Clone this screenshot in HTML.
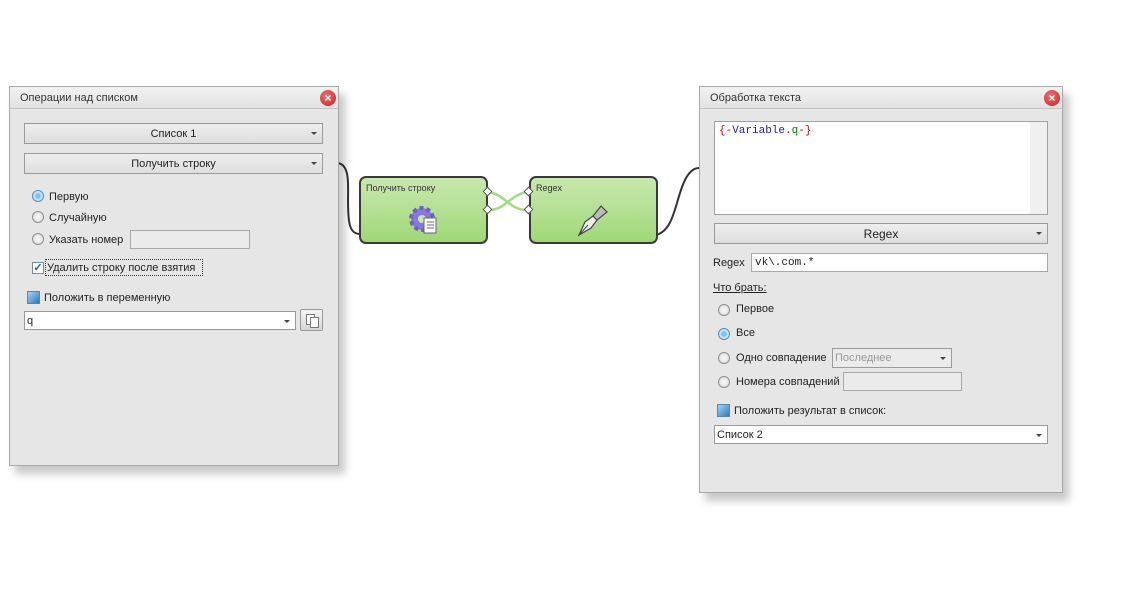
<!DOCTYPE html>
<html><head><meta charset="utf-8"><style>
*{box-sizing:border-box;margin:0;padding:0}
body{width:1137px;height:594px;background:#fff;position:relative;overflow:hidden;font-family:"Liberation Sans",Tahoma,sans-serif;font-size:11px;color:#222}
.a{position:absolute}
.panel{position:absolute;background:#e6e6e6;border:1px solid #a8a8a8;box-shadow:6px 8px 8px rgba(0,0,0,.22)}
.title{position:absolute;left:0;right:0;top:0;height:22px;background:linear-gradient(#f2f2f2,#e2e2e2);border-bottom:1px solid #c4c4c4;padding:5px 0 0 10px;font-size:11px;color:#333}
.close{position:absolute;right:2px;top:3px;width:16px;height:16px;border-radius:50%;background:radial-gradient(circle at 40% 35%,#f07070,#c81e1e);color:#fff;font-size:12px;font-weight:bold;text-align:center;line-height:16px}
.combo{position:absolute;border:1px solid #9a9a9a;background:linear-gradient(#eee,#dedede);text-align:center;line-height:20px}
.combo:after{content:"";position:absolute;right:5px;top:8px;border:3px solid transparent;border-top:3px solid #444}
.white{background:#fff;text-align:left;padding-left:2px}
.radio{position:absolute;width:12px;height:12px;border-radius:50%;border:1px solid #8e8e8e;background:radial-gradient(#fafafa,#d8d8d8)}
.radio.on{background:radial-gradient(#7fc4f2 35%,#bfe0f6 45%,#eee);border-color:#4c8dbf}
.inp{position:absolute;border:1px solid #a8a8a8;background:#ebebeb}
.save{position:absolute;width:13px;height:13px;background:linear-gradient(135deg,#a8d4f4,#2c78c0);border:1px solid #5588aa}
.node{position:absolute;width:129px;height:68px;border:2px solid #3a3a3a;border-radius:7px;background:linear-gradient(#c8e8ae,#9fd878);font-size:9px;color:#333;padding:5px 0 0 5px}
.dia{position:absolute;width:7px;height:7px;background:#fff;border:1px solid #555;transform:rotate(45deg)}
</style></head><body>
<svg class="a" style="left:0;top:0" width="1137" height="594">
<path d="M338 163 C350 165 348 185 348 200 C348 225 350 233 359 234" fill="none" stroke="#333" stroke-width="2"/>
<path d="M656 235 C675 230 675 200 685 180 C690 170 695 168 699 168" fill="none" stroke="#333" stroke-width="2"/>
<path d="M489 192 C505 195 510 210 527 210" fill="none" stroke="#a4d883" stroke-width="2.5"/>
<path d="M489 210 C505 210 510 195 527 192" fill="none" stroke="#a4d883" stroke-width="2.5"/>
</svg>

<div class="panel" style="left:9px;top:86px;width:330px;height:380px">
<div class="title">Операции над списком<div class="close">×</div></div>
</div>
<div class="combo" style="left:24px;top:123px;width:299px;height:21px">Список 1</div>
<div class="combo" style="left:24px;top:153px;width:299px;height:21px">Получить строку</div>
<div class="radio on" style="left:32px;top:190px"></div><div class="a" style="left:49px;top:191px">Первую</div>
<div class="radio" style="left:32px;top:211px"></div><div class="a" style="left:49px;top:212px">Случайную</div>
<div class="radio" style="left:32px;top:233px"></div><div class="a" style="left:49px;top:234px">Указать номер</div>
<div class="inp" style="left:130px;top:230px;width:120px;height:19px"></div>
<div class="a" style="left:32px;top:262px;width:12px;height:12px;border:1px solid #6a8fb0;background:#fff;color:#2a5fa0;font-size:11px;line-height:10px;text-align:center;font-weight:bold">✓</div>
<div class="a" style="left:45px;top:259px;width:158px;height:17px;border:1px dotted #333;padding:2px 0 0 1px">Удалить строку после взятия</div>
<div class="save" style="left:27px;top:291px"></div><div class="a" style="left:44px;top:292px">Положить в переменную</div>
<div class="combo white" style="left:24px;top:311px;width:272px;height:19px;line-height:18px">q</div>
<div class="a" style="left:300px;top:309px;width:23px;height:22px;border:1px solid #999;border-radius:2px;background:linear-gradient(#f4f4f4,#d8d8d8)"><div class="a" style="left:5px;top:4px;width:9px;height:11px;border:1px solid #777;background:#fff"></div><div class="a" style="left:9px;top:7px;width:9px;height:11px;border:1px solid #777;background:#fff"></div></div>

<div class="node" style="left:359px;top:176px">Получить строку
<svg class="a" style="left:46px;top:26px" width="34" height="34"><circle cx="15" cy="15" r="11" fill="#8a78d8" stroke="#7060c0" stroke-width="4" stroke-dasharray="4 3"/><circle cx="15" cy="15" r="4" fill="#c8e8ae"/><rect x="17" y="14" width="12" height="15" fill="#fff" stroke="#666"/><path d="M20 18h7M20 21h7M20 24h7" stroke="#668" stroke-width="1"/></svg>
</div>
<div class="node" style="left:529px;top:176px">Regex
<svg class="a" style="left:44px;top:24px" width="36" height="36"><path d="M4 33 L10 20 L18 14 L22 18 L16 26 Z" fill="#eee" stroke="#444" stroke-width="1.2"/><path d="M18 14 L26 4 L32 10 L22 18Z" fill="#bbb" stroke="#444" stroke-width="1.2"/><path d="M4 33 L13 23" stroke="#444"/></svg>
</div>
<div class="dia" style="left:484px;top:188px"></div><div class="dia" style="left:484px;top:206px"></div>
<div class="dia" style="left:525px;top:188px"></div><div class="dia" style="left:525px;top:206px"></div>

<div class="panel" style="left:699px;top:86px;width:364px;height:407px">
<div class="title">Обработка текста<div class="close">×</div></div>
</div>
<div class="a" style="left:714px;top:121px;width:334px;height:94px;border:1px solid #a0a0a0;background:#fff;font-family:'Liberation Mono',monospace;font-size:11px;padding:3px 0 0 4px"><span style="color:#c00">{-</span><span style="color:#2020b0">Variable</span><span style="color:#c00">.</span><span style="color:#080">q</span><span style="color:#c00">-}</span><div class="a" style="right:0;top:0;width:17px;height:92px;background:#f0f0f0"></div></div>
<div class="combo" style="left:714px;top:223px;width:334px;height:21px;font-size:12px">Regex</div>
<div class="a" style="left:713px;top:257px">Regex</div>
<div class="a" style="left:751px;top:253px;width:297px;height:19px;border:1px solid #a8a8a8;background:#fff;font-family:'Liberation Mono',monospace;font-size:11px;padding:3px 0 0 3px">vk\.com.*</div>
<div class="a" style="left:713px;top:282px;text-decoration:underline">Что брать:</div>
<div class="radio" style="left:718px;top:304px"></div><div class="a" style="left:736px;top:303px">Первое</div>
<div class="radio on" style="left:718px;top:328px"></div><div class="a" style="left:736px;top:327px">Все</div>
<div class="radio" style="left:718px;top:352px"></div><div class="a" style="left:736px;top:352px">Одно совпадение</div>
<div class="combo white" style="left:832px;top:348px;width:120px;height:20px;line-height:18px;color:#999;background:#ebebeb">Последнее</div>
<div class="radio" style="left:718px;top:376px"></div><div class="a" style="left:736px;top:376px">Номера совпадений</div>
<div class="inp" style="left:843px;top:372px;width:119px;height:19px"></div>
<div class="save" style="left:717px;top:404px"></div><div class="a" style="left:734px;top:405px">Положить результат в список:</div>
<div class="combo white" style="left:714px;top:425px;width:334px;height:19px;line-height:18px">Список 2</div>
</body></html>
